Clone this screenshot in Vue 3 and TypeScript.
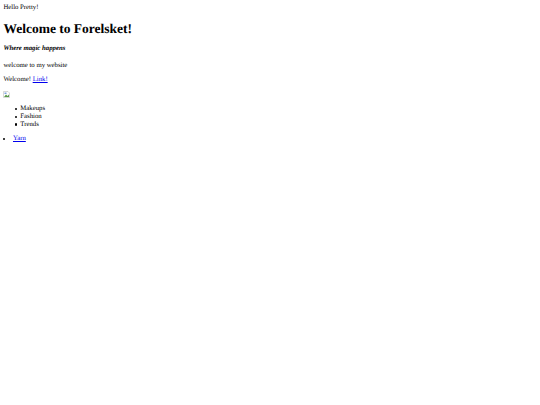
<script setup lang="ts">
const items: string[] = ['Makeups', 'Fashion', 'Trends']
</script>

<template>
  <div class="page">
    <div>Hello Pretty!</div>
    <h1 class="title">Welcome to Forelsket!</h1>
    <h4 class="tag"><em>Where magic happens</em></h4>
    <p class="line">welcome to my website</p>
    <p class="line">Welcome! <a href="#">Link!</a></p>
    <p class="line broken">
      <svg width="7" height="7" viewBox="0 0 14 14">
        <path d="M1 1H10L13 4V13H1Z" fill="#fff" stroke="#b0b0b0" />
        <path d="M2 12L6 7L9 10L12 7V12Z" fill="#5a9a4a" />
        <rect x="3" y="3" width="4" height="3" fill="#7aa0e0" />
      </svg>
    </p>
    <ul class="cats">
      <li v-for="item in items" :key="item">{{ item }}</li>
    </ul>
    <ul class="extra">
      <li><a href="#">Yarn</a></li>
    </ul>
  </div>
</template>

<style scoped>
.page {
  padding: 3.9px 3.4px 3.4px;
  font-family: "Liberation Serif", "Times New Roman", serif;
  font-size: 6.75px;
  line-height: 7.7px;
  color: #000;
  text-rendering: geometricPrecision;
}
.title { font-size: 13.5px; line-height: 15.5px; font-weight: bold; margin: 9px 0; }
.tag { font-size: 6.75px; font-weight: bold; margin: 9px 0; }
.line { margin: 6.75px 0; }
a { color: #00e; text-decoration: underline; }
.broken { height: 7.7px; }
.broken svg { display: block; }
.cats { margin: 6.75px 0; padding-left: 16.9px; list-style: none; }
.cats li { position: relative; }
.cats li::before {
  content: "";
  position: absolute;
  left: -5.6px;
  top: 2.9px;
  width: 2.2px;
  height: 2.2px;
  border-radius: 50%;
  background: #000;
}
.extra { margin: 6.75px 0; padding-left: 9.6px; }
</style>
